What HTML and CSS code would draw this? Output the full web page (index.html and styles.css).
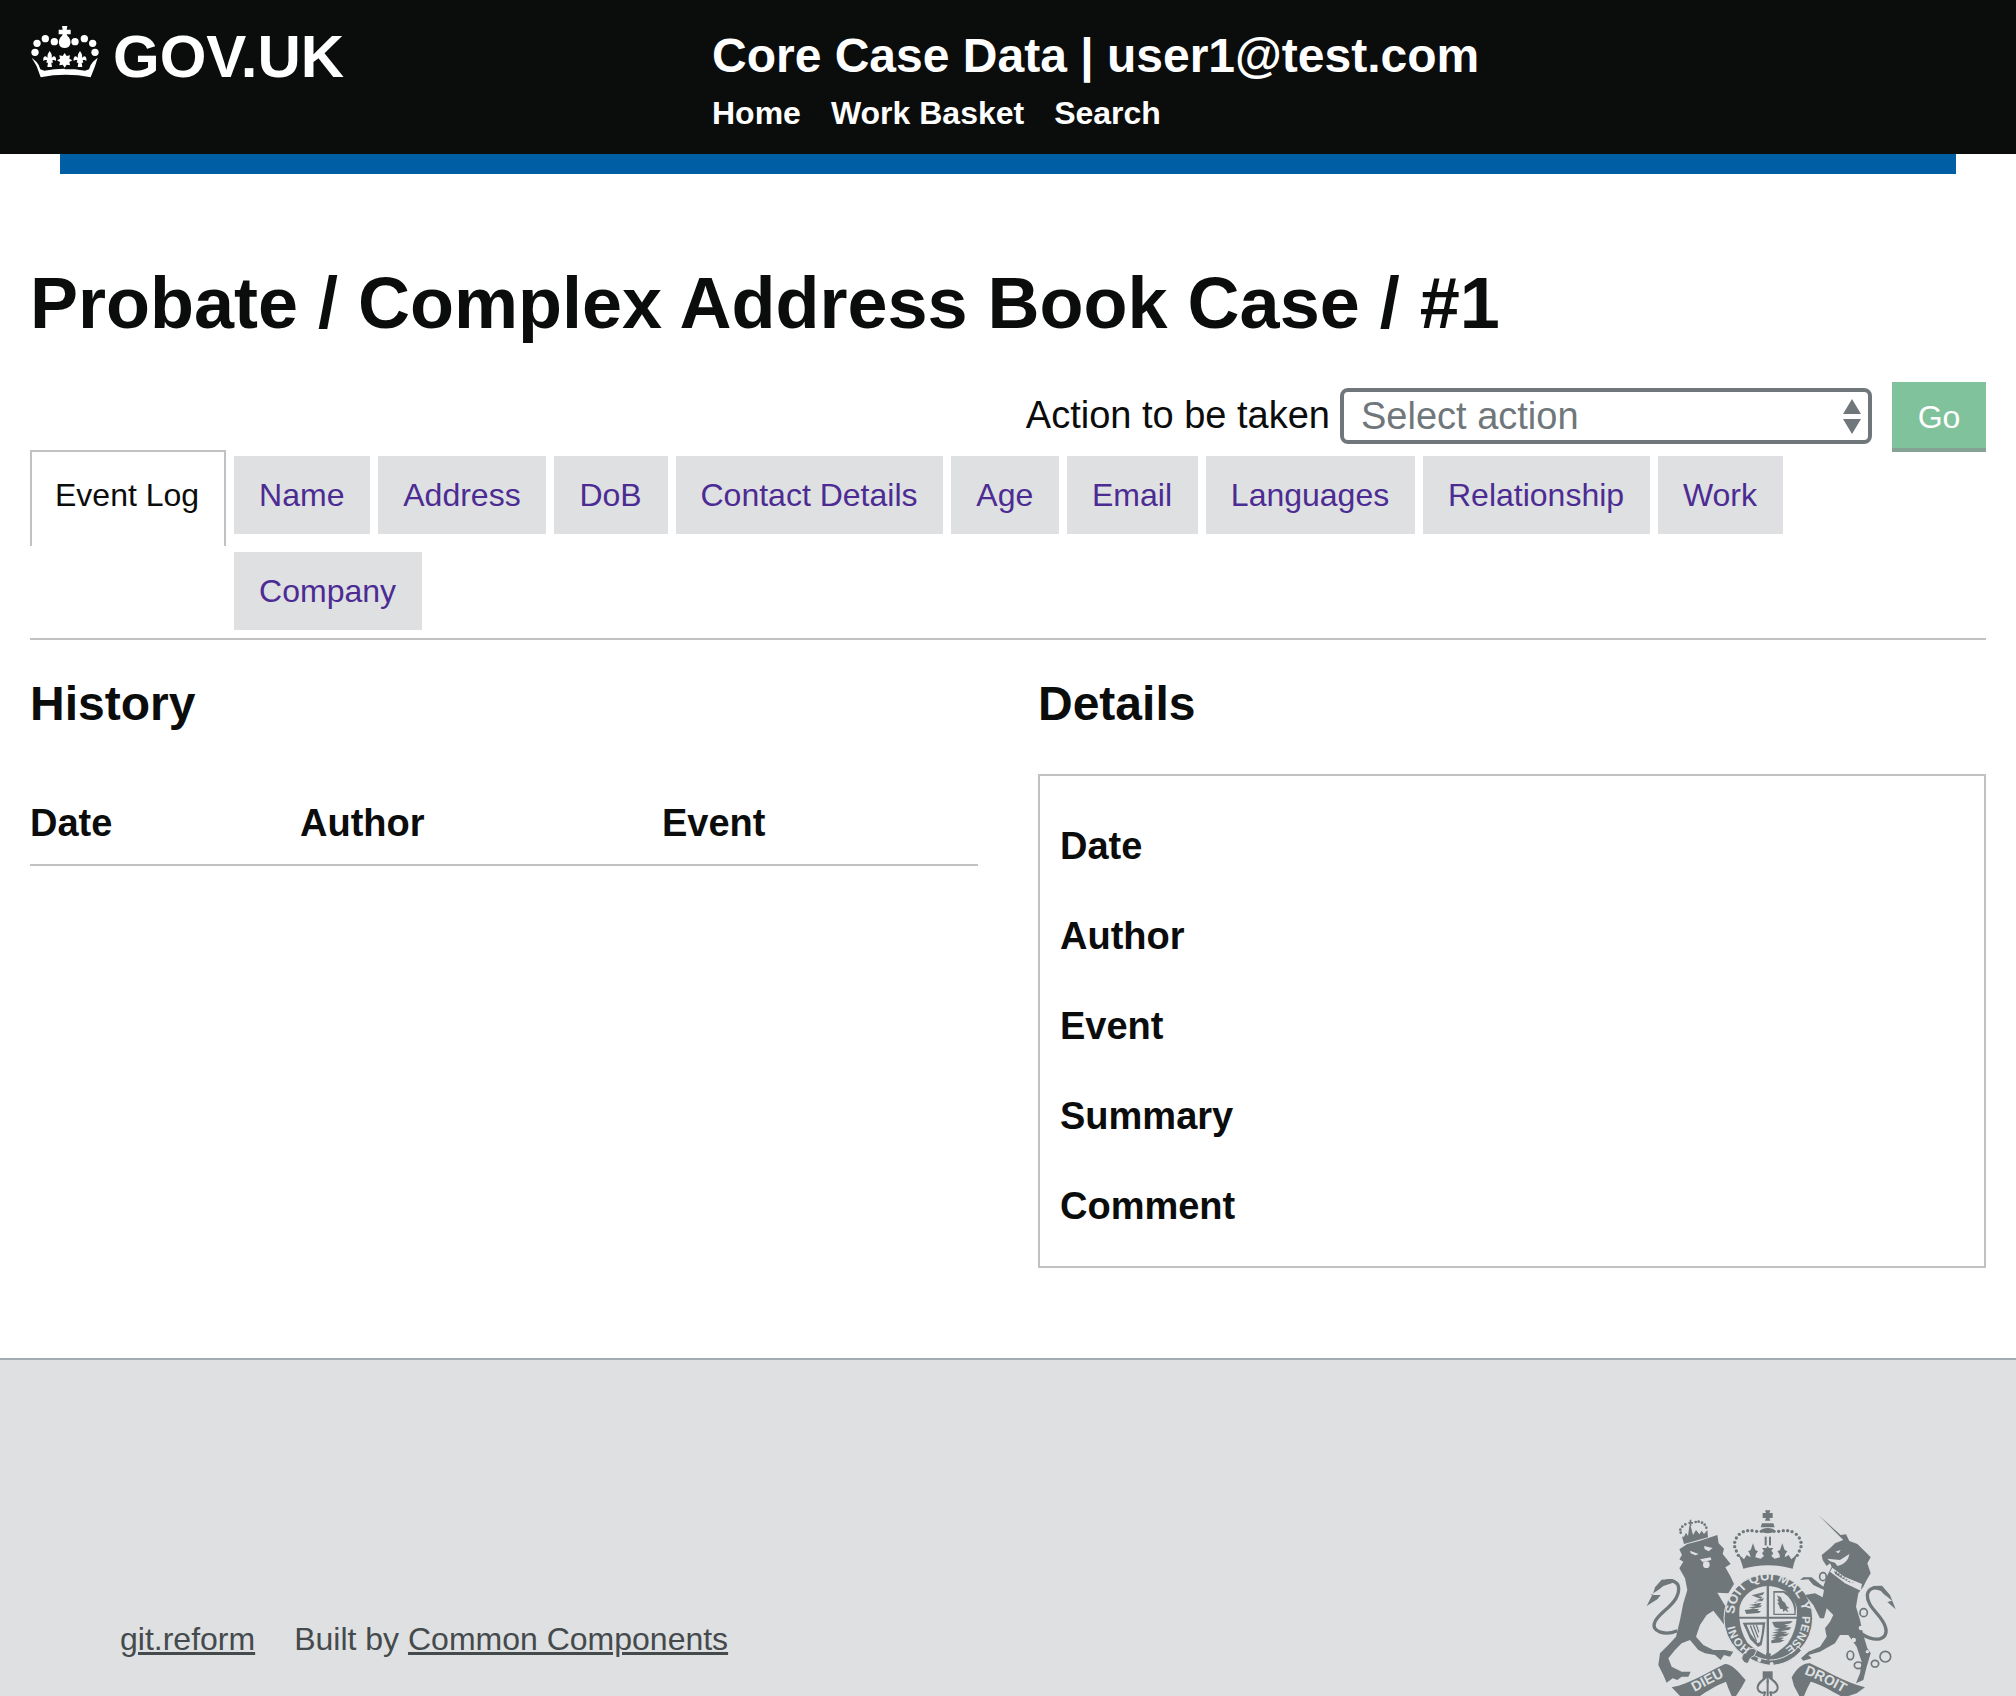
FILE: index.html
```html
<!DOCTYPE html>
<html lang="en">
<head>
<meta charset="utf-8">
<title>Core Case Data</title>
<link rel="stylesheet" href="styles.css">
</head>
<body>
<header class="site-header">
  <a class="logo" href="#">
    <svg class="crown" viewBox="0 0 240 192" aria-hidden="true">
      <g fill="#fff">
        <circle cx="30" cy="97" r="11"/><circle cx="36" cy="70" r="11"/><circle cx="61" cy="56" r="11"/><circle cx="88" cy="65" r="11"/>
        <circle cx="150" cy="65" r="11"/><circle cx="178" cy="56" r="11"/><circle cx="203" cy="70" r="11"/><circle cx="210" cy="97" r="11"/>
        <path d="M111 18h16l-2 11h12v14h-12l2 4c8 7 11 16 9 24-2 9-8 13-17 13s-15-4-17-13c-2-8 1-17 9-24l2-4h-12V29h12z"/>
        <path d="M119 99l6 9 10-2-2 10 9 5-9 5 2 10-10-2-6 9-6-9-10 2 2-10-9-5 9-5-2-10 10 2z"/>
        <path d="M74 93c5 7 8 13 6 20l6-4c6 0 8 6 7 14-3-3-7-4-11-2l2 7h-5l2 13h-14l2-13h-5l2-7c-4-2-8-1-11 2-1-8 1-14 7-14l6 4c-2-7 1-13 6-20z"/>
        <path d="M165 93c5 7 8 13 6 20l6-4c6 0 8 6 7 14-3-3-7-4-11-2l2 7h-5l2 13h-14l2-13h-5l2-7c-4-2-8-1-11 2-1-8 1-14 7-14l6 4c-2-7 1-13 6-20z"/>
        <path d="M20 113l14 12 7 10 5 13 12 4 30-4 30-2 2 2 30 0 30 4 12-4 5-13 7-10 14-12-8 26-13 33c-50-10-100-10-150 0l-12-33z"/>
      </g>
    </svg>
    <span class="logo-text">GOV.UK</span>
  </a>
  <div class="service">
    <div class="service-name">Core Case Data | user1@test.com</div>
    <nav class="service-nav">
      <a href="#">Home</a>
      <a href="#">Work Basket</a>
      <a href="#">Search</a>
    </nav>
  </div>
</header>
<div class="header-bar"></div>

<main class="content">
  <h1 class="case-title">Probate / Complex Address Book Case / #1</h1>

  <form class="action-form">
    <label class="action-label" for="action">Action to be taken</label>
    <div class="select-box" id="action">
      <span>Select action</span>
      <svg class="select-arrows" viewBox="0 0 18 35" aria-hidden="true"><path d="M9 0l9 15H0zM0 20h18L9 35z"/></svg>
    </div>
    <button type="button" class="go-button">Go</button>
  </form>

  <div class="tabs">
    <a class="tab tab-active" href="#">Event Log</a>
    <div class="tab-list">
      <a class="tab" href="#">Name</a>
      <a class="tab" href="#">Address</a>
      <a class="tab" href="#">DoB</a>
      <a class="tab" href="#">Contact Details</a>
      <a class="tab" href="#">Age</a>
      <a class="tab" href="#">Email</a>
      <a class="tab" href="#">Languages</a>
      <a class="tab" href="#">Relationship</a>
      <a class="tab" href="#">Work</a>
      <a class="tab" href="#">Company</a>
    </div>
  </div>

  <div class="columns">
    <section class="column">
      <h2 class="section-title">History</h2>
      <div class="history-head">
        <span>Date</span>
        <span>Author</span>
        <span>Event</span>
      </div>
    </section>
    <section class="column">
      <h2 class="section-title">Details</h2>
      <div class="details-box">
        <div class="detail-row">Date</div>
        <div class="detail-row">Author</div>
        <div class="detail-row">Event</div>
        <div class="detail-row">Summary</div>
        <div class="detail-row">Comment</div>
      </div>
    </section>
  </div>
</main>

<footer class="site-footer">
  <div class="footer-links">
    <a href="#">git.reform</a>
    <span>Built by <a href="#">Common Components</a></span>
  </div>
  <svg class="crest" viewBox="0 0 960 648" aria-hidden="true">
    <defs>
      <path id="motto-top" d="M404 403A101 101 0 0 1 606 400"/>
      <path id="motto-right" d="M606 408A102 102 0 0 1 546 509"/>
      <path id="motto-left" d="M452 504A103 103 0 0 1 402 420"/>
      <path id="dieu-path" d="M284 636C314 620 350 600 386 584"/>
      <path id="droit-path" d="M612 582C650 596 695 618 735 642"/>
    </defs>
    <g class="ink">
      <!-- lion tail -->
      <path class="line" d="M232 452C195 468 150 455 165 425C178 395 236 372 236 326C236 306 216 298 196 305"/>
      <path d="M220 297L185 299L165 322L160 338L140 378L172 358L182 345L152 345L178 328L190 318L215 310z"/>
      <!-- lion -->
      <path d="M238 208L262 192L300 182L352 165L356 190L372 206L368 222L392 252L376 262L392 290L402 312L385 340L352 338L372 372L395 405L412 432L404 445L378 442L362 420L340 392L320 405L300 435L288 470L310 495L340 510L375 510L400 515L390 530L372 525L362 540L345 525L315 520L295 510L270 480L245 490L225 510L205 535L215 560L245 575L272 575L265 590L245 590L232 600L218 595L200 608L190 585L175 555L180 520L205 495L228 470L240 420L250 370L262 330L255 295L238 265L250 245L238 238L246 225z"/>
      <path class="gap" d="M270 212L296 222L286 226L272 220zM312 198L338 204L326 214L314 208zM300 238L332 232L334 240L308 246z"/>
      <circle class="gap" cx="319" cy="254" r="10"/>
      <!-- lion crown -->
      <path d="M246 170L252 192L324 172L322 150L312 162L305 152L298 163L288 150L279 165L272 138L268 138L264 168L258 158L252 170z"/>
      <path d="M265 126h4v-7h5v7h5v5h-5v7h-5v-7h-4z"/>
      <circle cx="242" cy="158" r="4"/><circle cx="241" cy="149" r="4"/><circle cx="247" cy="140" r="4"/><circle cx="256" cy="133" r="4"/>
      <circle cx="287" cy="126" r="4"/><circle cx="296" cy="125" r="4"/><circle cx="306" cy="128" r="4"/><circle cx="314" cy="134" r="4"/><circle cx="319" cy="143" r="4"/>

      <!-- central crown -->
      <path d="M495 91h16l-3 8h10v15h-10l3 8h-16l3-8h-10V99h10z"/>
      <path d="M486 130h34l4 12h-42z"/>
      <ellipse cx="503" cy="152" rx="20" ry="8"/>
      <rect x="494" y="170" width="6" height="26"/><rect x="507" y="170" width="6" height="26"/>
      <circle cx="484" cy="154" r="5"/><circle cx="470" cy="154" r="5"/><circle cx="456" cy="152" r="5"/><circle cx="443" cy="152" r="5"/><circle cx="430" cy="155" r="5"/><circle cx="418" cy="163" r="5"/><circle cx="409" cy="174" r="5"/><circle cx="404" cy="187" r="5"/><circle cx="404" cy="200" r="5"/><circle cx="409" cy="213" r="5"/><circle cx="415" cy="226" r="5"/>
      <circle cx="522" cy="154" r="5"/><circle cx="536" cy="154" r="5"/><circle cx="550" cy="152" r="5"/><circle cx="563" cy="152" r="5"/><circle cx="576" cy="155" r="5"/><circle cx="589" cy="163" r="5"/><circle cx="598" cy="174" r="5"/><circle cx="603" cy="187" r="5"/><circle cx="603" cy="200" r="5"/><circle cx="598" cy="213" r="5"/><circle cx="592" cy="226" r="5"/>
      <path d="M415 222L432 238L440 225L452 232L448 218L444 214L452 210L459 190L466 210L474 214L468 222L466 232L482 236L492 228L486 220L492 212L486 204H499L503 198L507 204H520L514 212L520 220L514 228L524 236L540 232L538 222L532 214L540 210L547 190L554 210L562 214L556 222L554 232L566 225L574 238L592 222L582 250L578 266C530 252 476 252 430 266L425 250z"/>

      <!-- garter ring -->
      <circle class="ring" cx="505" cy="415" r="133"/>
      <path class="gap" d="M430 270C478 254 532 254 580 270C572 280 568 284 562 287C525 277 482 277 446 287C440 284 435 280 430 270z"/>
      <path class="gap" d="M419 380C428 345 462 319 503 318C546 319 582 345 590 382C594 425 582 465 562 492C545 508 525 522 508 530C485 520 460 506 442 488C424 460 414 422 419 380z"/>
      <path d="M500 316h7v216h-7zM416 410h176v6H416z"/>
      <!-- first quarter: three lions -->
      <path d="M455 346l38-10-4 8-14 4 13 3-9 6 13-2-5 8-26 5 24 2-8 7 9-2-5 7-24 4 20 1-5 6 11 0-6 6-38 3-5-12 28-4-16-3 22-5-20-3 28-5-14-3 22-4-16-2 15-5-14-4z"/>
      <!-- second quarter: rampant lion -->
      <path d="M520 333h32c18 6 32 20 36 48l-1 24h-67zM524 338v63h59c2-28-12-50-33-63z" fill-rule="evenodd"/>
      <path d="M531 346l12 6 4 10 8 6 5 11 8 5-8 2 6 11-11-6-5 5-2-9-8-1-3-10-5-6 5-3-6-8 5-1z"/>
      <!-- third quarter: harp -->
      <path fill-rule="evenodd" d="M428 428l68-1-4 32-7 36-11 6-24-24-13-30c-3-6-6-12-9-19zm12 6l12 28 21 28 7-4 5-24 3-28z"/>
      <path d="M449 437l4-1 18 47-3 2zM458 436l4-1 14 36-3 3zM467 435l4 0 7 20-2 5z"/>
      <!-- fourth quarter: three lions -->
      <path d="M516 426l62-3-6 7-20 4 16 3-14 5 20 0-6 7-28 5 22 2-12 6 18-2-10 8-24 4 18 1-10 7 12 0-12 7-28 3 0-9 14-5-14-2 16-5-16-3 20-5-18-3 22-5-18-3 20-4-16-4z"/>
      <!-- ring belt -->
      <path class="belt" d="M430 521C452 542 482 552 510 556C548 556 578 540 604 512L596 500C570 526 540 540 510 540C484 538 462 530 446 514z"/>
      <circle class="gap" cx="478" cy="540" r="6"/><circle class="gap" cx="515" cy="552" r="6"/>
      <path class="belt" d="M425 535C428 520 442 505 460 505L470 512L462 528C455 530 448 535 446 548C438 552 430 548 425 535z"/>
      <path d="M498 520h14v15l-7 7-7-7z"/>

      <!-- unicorn tail -->
      <path class="line" d="M785 462C830 490 868 478 856 440C846 405 800 382 802 345C805 322 830 318 848 328"/>
      <path d="M818 318L846 317L870 345L887 388L862 366L876 362L852 342L860 352L842 332L825 328z"/>
      <!-- unicorn -->
      <path d="M655 105L722 165L738 163L748 183L772 192L796 215L812 232L802 250L812 280L800 300L790 320L775 340L768 380L780 420L790 465L802 505L812 520L800 560L790 600L768 610L780 580L785 545L770 500L745 465L720 465L705 490L660 515L625 525L635 535L610 542L603 535L625 515L660 500L680 470L675 445L690 425L700 405L680 385L672 415L660 415L640 375L615 345L645 340L668 352L672 330L640 315L625 298L600 300L610 292L635 292L655 308L670 320L680 290L695 260L690 250L680 258L668 240L665 225L690 205L705 190L730 180z"/>
      <path class="gap" d="M690 275L697 263L733 290L786 312L782 332L735 310zM682 236L720 240L748 222C745 240 735 252 712 258L705 248L690 244zM706 215L722 210L716 220z"/>
      <path d="M702 272l5 4 3-3 2 8 7-2-1 8 8-2-1 8 9-1-1 7 9-2-1 7 9-2-1 6 8-1 6 3-18-5-22-12-18-12z"/>
      <circle class="gap" cx="783" cy="444" r="7"/><circle class="gap" cx="761" cy="480" r="7"/><circle class="gap" cx="802" cy="515" r="5"/>
      <g class="chain">
        <ellipse cx="669" cy="290" rx="10" ry="12"/><ellipse cx="656" cy="375" rx="10" ry="12"/><ellipse cx="791" cy="398" rx="11" ry="12"/>
        <ellipse cx="751" cy="526" rx="10" ry="13"/><ellipse cx="775" cy="556" rx="12" ry="10"/><ellipse cx="825" cy="551" rx="11" ry="10"/><ellipse cx="856" cy="530" rx="16" ry="16"/>
      </g>

      <!-- scrolls and rosette -->
      <path d="M437 600C412 572 395 552 375 552C330 572 270 612 215 622L240 648H300C320 634 350 615 378 605L385 625L395 648H408L425 622z"/>
      <path d="M575 592C590 565 610 548 630 550C680 572 730 606 795 622L770 640L745 648H722C690 630 660 612 632 605L622 625L612 648H598L582 618z"/>
      <rect x="488" y="574" width="30" height="34"/>
      <path class="thin" d="M503 588C515 600 535 608 533 625C530 640 515 640 510 635L514 648M503 588C491 600 471 608 473 625C476 640 491 640 496 635L492 648M503 596V648"/>
    </g>
    <g class="crest-text">
      <text class="motto"><textPath href="#motto-top">SOIT QUI MAL Y</textPath></text>
      <text class="motto-small"><textPath href="#motto-right">PENSE</textPath></text>
      <text class="motto-small"><textPath href="#motto-left">HONI</textPath></text>
      <text class="scroll-text"><textPath href="#dieu-path">DIEU</textPath></text>
      <text class="scroll-text"><textPath href="#droit-path">DROIT</textPath></text>
    </g>
  </svg>
</footer>
</body>
</html>
```

FILE: styles.css
```css
* { box-sizing: border-box; }
html, body { margin: 0; padding: 0; }
body {
  font-family: "Liberation Sans", Arial, sans-serif;
  color: #0b0c0c;
  background: #fff;
  height: 1696px;
  overflow: hidden;
}
a { color: inherit; }

.site-header {
  background: #0b0c0c;
  height: 154px;
  display: flex;
  color: #fff;
}
.logo {
  display: flex;
  align-items: flex-start;
  width: 712px;
  padding: 20px 0 0 25px;
  text-decoration: none;
  color: #fff;
}
.crown { width: 80px; height: 64px; flex: none; }
.logo-text {
  font-size: 60px;
  font-weight: 700;
  line-height: 62px;
  margin-left: 8px;
  margin-top: 6px;
}
.service { padding-top: 29px; }
.service-name {
  font-size: 48px;
  font-weight: 700;
  line-height: 54px;
}
.service-nav {
  display: flex;
  gap: 30px;
  margin-top: 12px;
  font-size: 32px;
  font-weight: 700;
  line-height: 36px;
}
.service-nav a { color: #fff; text-decoration: none; }
.header-bar {
  height: 20px;
  margin: 0 60px;
  background: #005ea5;
}

.content { padding: 89px 30px 0; height: 1184px; }
.case-title {
  margin: 0;
  font-size: 72px;
  line-height: 80px;
  font-weight: 700;
}
.action-form {
  display: flex;
  justify-content: flex-end;
  align-items: flex-start;
  margin-top: 39px;
  height: 70px;
}
.action-label { font-size: 38px; line-height: 44px; margin-top: 11px; margin-right: 10px; }
.select-box {
  width: 532px;
  height: 56px;
  margin-top: 6px;
  margin-right: 20px;
  border: 4px solid #6f777b;
  border-radius: 8px;
  font-size: 38px;
  line-height: 46px;
  color: #6f777b;
  padding-left: 17px;
  display: flex;
  justify-content: space-between;
  align-items: center;
}
.select-arrows { width: 18px; height: 35px; margin-right: 7px; fill: #6f777b; flex: none; }
.go-button {
  width: 94px;
  height: 70px;
  border: 0;
  border-bottom: 4px solid #85a394;
  background: #7fc29b;
  color: #fff;
  font: 32px/1 "Liberation Sans", Arial, sans-serif;
  padding: 3px 0 0;
}

.tabs {
  display: flex;
  align-items: flex-start;
  gap: 8px;
  margin-top: -2px;
  height: 190px;
  border-bottom: 2px solid #bfc1c3;
}
.tab {
  display: block;
  height: 78px;
  padding: 0 25.8px 0 25px;
  background: #dee0e2;
  color: #4c2c92;
  font-size: 32px;
  line-height: 78px;
  text-decoration: none;
}
.tab-active {
  height: 96px;
  background: #fff;
  color: #0b0c0c;
  border: 2px solid #bfc1c3;
  border-bottom: 0;
  line-height: 86px;
  padding: 0 25px 0 23px;
  flex: none;
}
.tab-list {
  flex: 1;
  display: flex;
  flex-wrap: wrap;
  gap: 18px 8px;
  padding-top: 6px;
  padding-right: 100px;
}

.columns {
  display: grid;
  grid-template-columns: 948px 948px;
  gap: 60px;
}
.section-title {
  margin: 37px 0 0;
  font-size: 48px;
  line-height: 54px;
  font-weight: 700;
}
.history-head {
  display: grid;
  grid-template-columns: 270px 362px 1fr;
  margin-top: 43px;
  height: 92px;
  font-size: 38px;
  line-height: 44px;
  font-weight: 700;
  padding-top: 27px;
  border-bottom: 2px solid #bfc1c3;
}
.details-box {
  margin-top: 43px;
  height: 494px;
  border: 2px solid #bfc1c3;
  padding: 25px 20px;
}
.detail-row {
  height: 90px;
  padding-top: 23px;
  font-size: 38px;
  line-height: 44px;
  font-weight: 700;
}

.site-footer {
  display: flex;
  align-items: flex-start;
  height: 338px;
  padding-left: 120px;
  background: #dee0e2;
  border-top: 2px solid #a1acb2;
  overflow: hidden;
}
.footer-links {
  display: flex;
  gap: 39px;
  margin-top: 261px;
  font-size: 32px;
  line-height: 36px;
  color: #454a4c;
}
.crest {
  flex: none;
  width: 320px;
  height: 216px;
  margin-top: 120px;
  margin-left: auto;
  margin-right: 96px;
}
.ink { fill: #6f777b; }
.ink .gap { fill: #dee0e2; }
.ink .ring { stroke: #dee0e2; stroke-width: 3; }
.ink .line { fill: none; stroke: #6f777b; stroke-width: 10; }
.ink .chain { fill: none; stroke: #6f777b; stroke-width: 5; }
.ink .thin { fill: #dee0e2; stroke: #6f777b; stroke-width: 6; }
.ink .belt { stroke: #dee0e2; stroke-width: 3; }
.crest-text text {
  font-family: "Liberation Sans", Arial, sans-serif;
  font-weight: 700;
  fill: #dee0e2;
}
.motto { font-size: 40px; }
.motto-small { font-size: 34px; }
.scroll-text { font-size: 42px; }
```
